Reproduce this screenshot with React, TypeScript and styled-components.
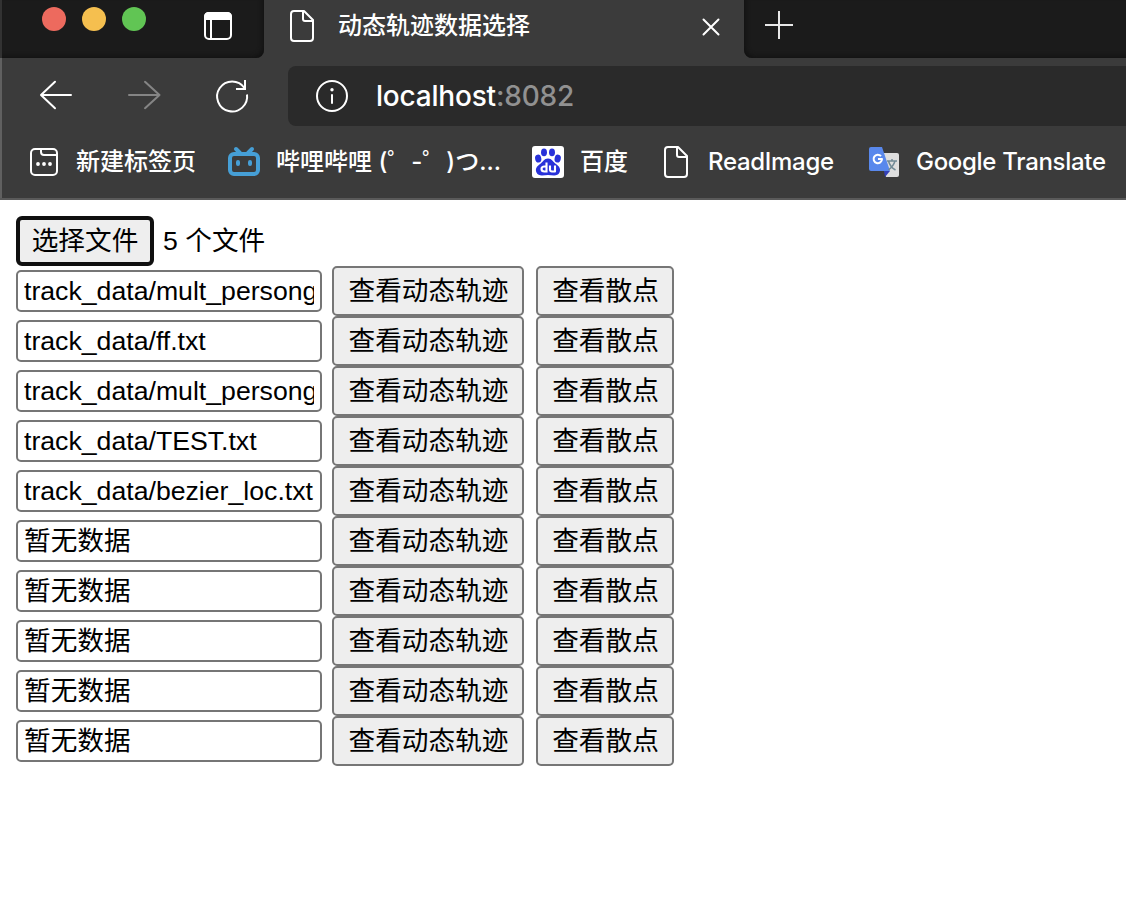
import React from "react";
import styled, { createGlobalStyle } from "styled-components";

const GlobalStyle = createGlobalStyle`
  *, *::before, *::after { box-sizing: border-box; }
  html, body { margin: 0; background: #fff; }
  body { overflow: hidden; }
`;

const Screen = styled.div`
  width: 1126px;
  height: 922px;
  overflow: hidden;
  background: #fff;
`;

const BrowserChrome = styled.header`
  height: 200px;
  background: #3b3b3b;
  border-bottom: 2px solid #5a5a5a;
  font-family: Inter, "Noto Sans CJK SC", sans-serif;
  font-size: 24px;
  font-weight: 500;
  color: #fff;
  white-space: nowrap;
`;

const TabStrip = styled.div`
  display: flex;
  height: 58px;
`;

const WindowArea = styled.div`
  display: flex;
  width: 264px;
  padding: 7px 0 0 40px;
  border-left: 2px solid #323232;
  border-bottom-right-radius: 8px;
  background: #1b1b1b;
  box-shadow: inset -3px -3px 5px -2px #111;
`;

const TrafficLights = styled.div`
  display: flex;
  gap: 16px;
  width: 161px;
`;

const Light = styled.span<{ $color: string }>`
  width: 24px;
  height: 24px;
  border-radius: 50%;
  background: ${(p) => p.$color};
`;

const ActiveTab = styled.div`
  display: flex;
  width: 480px;
  padding-left: 25px;
`;

const TabTitle = styled.span`
  width: 360px;
  padding-left: 23px;
  line-height: 52px;
`;

const NewTabArea = styled.div`
  flex: 1;
  padding: 11px 0 0 20px;
  background: #1b1b1b;
  border-bottom-left-radius: 8px;
  box-shadow: inset 3px -3px 5px -2px #111;
`;

const Toolbar = styled.div`
  display: flex;
  height: 68px;
  padding-top: 8px;
  border-left: 2px solid #606060;
`;

const NavButtons = styled.div`
  display: flex;
  width: 286px;
  padding: 11px 0 0 36px;
  gap: 52px;
`;

const AddressBar = styled.div`
  display: flex;
  flex: 1;
  height: 60px;
  padding-left: 26px;
  border-radius: 8px 0 0 8px;
  background: #2a2a2a;
`;

const Address = styled.span`
  padding-left: 26px;
  font-size: 28px;
  line-height: 61px;
  letter-spacing: -0.2px;
`;

const Port = styled.span`
  color: #919191;
`;

const Bookmarks = styled.nav`
  display: flex;
  height: 72px;
  padding-left: 26px;
  border-left: 2px solid #606060;
`;

const Bookmark = styled.div<{ $width: number; $gap?: number; $tracking?: number }>`
  display: flex;
  flex: none;
  width: ${(p) => p.$width}px;
  gap: ${(p) => p.$gap ?? 14}px;
  letter-spacing: ${(p) => p.$tracking ?? 0}px;
  line-height: 72px;
`;

const Icon = styled.svg`
  flex: none;
  display: block;
  fill: none;
  stroke: currentColor;
  stroke-width: 2;
  stroke-linecap: round;
  stroke-linejoin: round;
`;

const TabIcon = styled(Icon)`
  margin-top: 9px;
`;

const CloseIcon = styled(Icon)`
  margin: 17px 0 0 26px;
`;

const BarIcon = styled(Icon)`
  margin-top: 12px;
`;

const BookmarkIcon = styled(Icon)`
  margin-top: 18px;
`;

const Page = styled.main`
  padding: 16px;
  font-family: "Liberation Sans", "Noto Sans CJK SC", sans-serif;
  font-size: 26.667px;
  color: #000;
  white-space: nowrap;
`;

const FilePicker = styled.div`
  display: flex;
  height: 50px;
  line-height: 50px;
  gap: 9px;
`;

const FileButton = styled.button`
  width: 138px;
  height: 50px;
  padding: 0;
  font: inherit;
  line-height: 40px;
  color: #000;
  background: #eee;
  border: 4px solid #101010;
  border-radius: 6px;
`;

const TrackRow = styled.div`
  display: flex;
  align-items: center;
  height: 50px;
`;

const PathBox = styled.div`
  width: 306px;
  height: 42px;
  padding: 0 6px;
  border: 2px solid #767676;
  border-radius: 5px;
  line-height: 39px;
  margin-right: 10px;
`;

const PathText = styled.div`
  height: 38px;
  overflow: hidden;
`;

const ActionButton = styled.button<{ $width: number }>`
  width: ${(p) => p.$width}px;
  height: 50px;
  margin-right: 12px;
  padding: 0 0 0 1px;
  font: inherit;
  line-height: 40px;
  color: #000;
  background: #eee;
  border: 2px solid #767676;
  border-radius: 5px;
`;

const DocumentShape = () => (
  <path d="M5 3H15L24 12V30Q24 33 21 33H5Q2 33 2 30V6Q2 3 5 3M14 3V11Q14 13 16 13H24" />
);

const paths = [
  "track_data/mult_persong",
  "track_data/ff.txt",
  "track_data/mult_persong",
  "track_data/TEST.txt",
  "track_data/bezier_loc.txt",
  "暂无数据",
  "暂无数据",
  "暂无数据",
  "暂无数据",
  "暂无数据",
];

export default function App() {
  return (
    <Screen>
      <GlobalStyle />
      <BrowserChrome>
        <TabStrip>
          <WindowArea>
            <TrafficLights>
              <Light $color="#ed6a5e" />
              <Light $color="#f5bf4f" />
              <Light $color="#61c554" />
            </TrafficLights>
            <Icon width="30" height="40" viewBox="0 0 30 40">
              <rect x="2" y="6" width="26" height="26" rx="4" />
              <path d="M2 12V10Q2 6 6 6H24Q28 6 28 10V12Z" fill="currentColor" />
              <path d="M8 12V32" />
            </Icon>
          </WindowArea>
          <ActiveTab>
            <TabIcon width="26" height="34" viewBox="0 1 26 34"><DocumentShape /></TabIcon>
            <TabTitle>动态轨迹数据选择</TabTitle>
            <CloseIcon width="20" height="20" viewBox="0 0 20 20">
              <path d="M2.5 2.5L17.5 17.5M17.5 2.5L2.5 17.5" />
            </CloseIcon>
          </ActiveTab>
          <NewTabArea>
            <Icon width="30" height="30" viewBox="0 0 30 30">
              <path d="M1 14H29M15 0V28" stroke="#e8e8e8" strokeLinecap="butt" />
            </Icon>
          </NewTabArea>
        </TabStrip>
        <Toolbar>
          <NavButtons>
            <Icon width="36" height="36" viewBox="0 0 36 36">
              <path d="M33 18H3M17 4.8L3 18L17 31.2" />
            </Icon>
            <Icon width="36" height="36" viewBox="0 0 36 36">
              <path d="M3 18H33.5M19 4.8L33.5 18L19 31.2" stroke="#858585" />
            </Icon>
            <Icon width="36" height="38" viewBox="0 0 36 38">
              <path d="M33 17.5A15 15 0 1 1 30.5 11M31 3V12H22" strokeLinecap="butt" strokeLinejoin="miter" />
            </Icon>
          </NavButtons>
          <AddressBar>
            <BarIcon width="36" height="36" viewBox="0 0 36 36">
              <circle cx="18" cy="18" r="15" />
              <path d="M18 17V25" />
              <circle cx="18" cy="11.8" r="1.7" fill="currentColor" stroke="none" />
            </BarIcon>
            <Address>localhost<Port>:8082</Port></Address>
          </AddressBar>
        </Toolbar>
        <Bookmarks>
          <Bookmark $width={198}>
            <BookmarkIcon width="34" height="36" viewBox="0 0 34 36">
              <rect x="3" y="5" width="26" height="26" rx="4" />
              <path d="M13 5V8Q13 11 16 11H29" />
              <path d="M10 20H10.01M16 20H16.01M22 20H22.01" strokeWidth="3.8" />
            </BookmarkIcon>
            <span>新建标签页</span>
          </Bookmark>
          <Bookmark $width={304}>
            <BookmarkIcon width="36" height="36" viewBox="0 0 36 36">
              <g stroke="#469fd6" strokeWidth="4">
                <rect x="4" y="10" width="28" height="20" rx="4" />
                <path d="M10 5L14 9M26 5L22 9" />
                <path d="M12 18V20M24 18V20" />
              </g>
            </BookmarkIcon>
            <span>哔哩哔哩 (゜-゜)つ...</span>
          </Bookmark>
          <Bookmark $width={132}>
            <BookmarkIcon width="36" height="36" viewBox="0 0 36 36">
              <g stroke="none">
                <rect x="2" y="2" width="32" height="32" rx="3" fill="#fff" />
                <g fill="#2831d9">
                  <ellipse cx="8.2" cy="14.6" rx="3.1" ry="4" transform="rotate(-12 8.2 14.6)" />
                  <ellipse cx="14" cy="8.3" rx="3" ry="3.9" />
                  <ellipse cx="22" cy="8.3" rx="3" ry="3.9" />
                  <ellipse cx="27.7" cy="14.6" rx="3.1" ry="4" transform="rotate(12 27.7 14.6)" />
                  <path d="M18 14.5C22 14.5 23 18 26 20C29.5 22.5 31 25 29.5 28.5C27.5 33 22 31 18 31C14 31 8.500 33 6.500 28.500C5 25 6.500 22.500 10 20C13 18 14 14.500 18 14.500Z" />
                </g>
              </g>
              <g stroke="#fff" strokeWidth="2.1" strokeLinecap="butt">
                <path d="M16.500 18.500V28.500M16.500 22.500H14.500Q11.500 22.500 11.500 25T14.500 27.500H16.500M20 21.500V25.500Q20 27.500 22 27.500H25V21.500" />
              </g>
            </BookmarkIcon>
            <span>百度</span>
          </Bookmark>
          <Bookmark $width={204} $gap={16} $tracking={-0.3}>
            <BookmarkIcon width="30" height="36" viewBox="-1 0 30 36"><DocumentShape /></BookmarkIcon>
            <span>ReadImage</span>
          </Bookmark>
          <Bookmark $width={250} $gap={16} $tracking={-0.3}>
            <BookmarkIcon width="34" height="36" viewBox="0 0 34 36">
              <g stroke="none">
                <path d="M15 9H31Q33 9 33 11V31Q33 33 31 33H20Z" fill="#dedede" />
                <path d="M18 27H24L19 33Z" fill="#3340b8" />
                <path d="M5 3H16L24 27H5Q3 27 3 25V5Q3 3 5 3Z" fill="#5988ec" />
              </g>
              <path d="M15 12.2A4.200 4.200 0 1 0 16 15H12" stroke="#fff" strokeWidth="2" strokeLinecap="butt" />
              <path d="M21 17H31M26 15V17M22.5 17Q24 23 29.5 26M29 17Q27.5 22 22.5 26" stroke="#718a96" strokeWidth="1.5" strokeLinecap="butt" />
            </BookmarkIcon>
            <span>Google Translate</span>
          </Bookmark>
        </Bookmarks>
      </BrowserChrome>
      <Page>
        <FilePicker>
          <FileButton>选择文件</FileButton>
          <span>5 个文件</span>
        </FilePicker>
        {paths.map((path, index) => (
          <TrackRow key={index}>
            <PathBox><PathText>{path}</PathText></PathBox>
            <ActionButton $width={192}>查看动态轨迹</ActionButton>
            <ActionButton $width={138}>查看散点</ActionButton>
          </TrackRow>
        ))}
      </Page>
    </Screen>
  );
}
